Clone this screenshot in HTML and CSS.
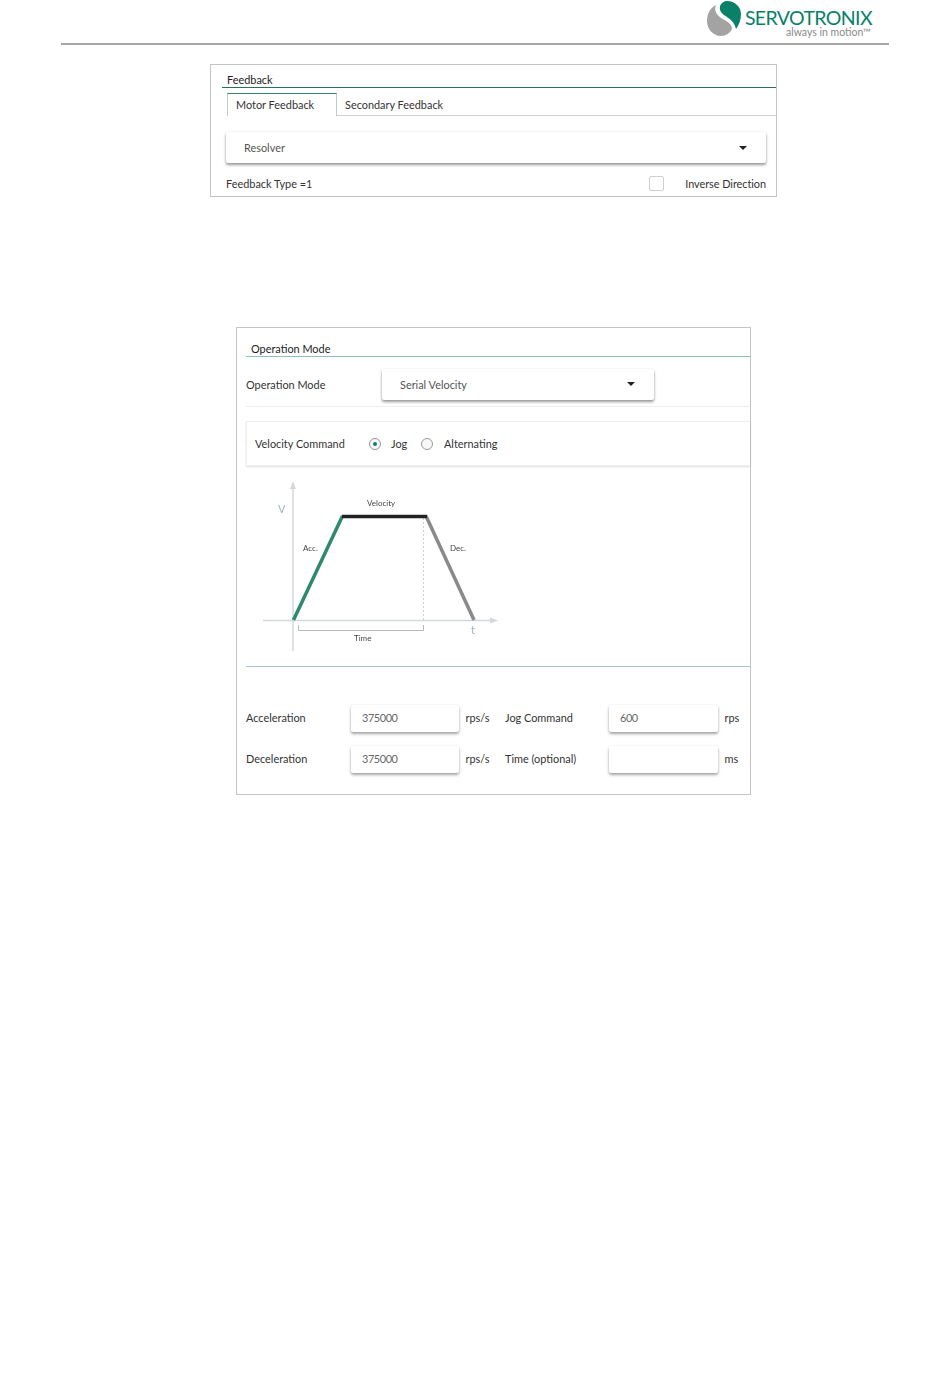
FILE: index.html
```html
<!DOCTYPE html>
<html lang="en">

<head>
    <meta charset="UTF-8">
    <meta name="viewport" content="width=device-width, initial-scale=1.0">
    <title>Servotronix Feedback and Operation Mode</title>
    <link rel="stylesheet" href="styles.css">
</head>

<body>
    <header class="page-header">
        <div class="logo">
            <svg class="logo-mark" width="42" height="38" viewBox="0 0 42 38">
                <path fill="#a3a3a3" d="M16 5C14 10 16 14 21 18C27 21 32 24 32 29C30 33 26 36 21 36C13 36 7 29 7 21C7 14 10 8 16 5Z" />
                <path fill="#0b8068" d="M20 6C21 3 24 1 27 1C35 1 41 7 41 14C41 20 39 25 36 29C35 24 32 20 27 17C22 14 19 11 20 6Z" />
            </svg>
            <div class="logo-text">
                <span class="logo-name">SERVOTRONIX</span>
                <span class="logo-tag">always in motion™</span>
            </div>
        </div>
    </header>

    <section class="panel feedback-panel">
        <h2 class="panel-title">Feedback</h2>
        <div class="tabs">
            <div class="tab active">Motor Feedback</div>
            <div class="tab">Secondary Feedback</div>
        </div>
        <div class="select feedback-select">
            <span>Resolver</span>
            <i class="caret"></i>
        </div>
        <div class="feedback-footer">
            <span>Feedback Type =1</span>
            <div class="inverse">
                <i class="checkbox"></i>
                <span>Inverse Direction</span>
            </div>
        </div>
    </section>

    <section class="panel mode-panel">
        <h2 class="panel-title mode-title">Operation Mode</h2>
        <div class="mode-row">
            <span class="mode-label">Operation Mode</span>
            <div class="select mode-select">
                <span>Serial Velocity</span>
                <i class="caret"></i>
            </div>
        </div>
        <div class="velocity-card">
            <span class="velocity-label">Velocity Command</span>
            <i class="radio checked"></i>
            <span class="radio-text jog">Jog</span>
            <i class="radio"></i>
            <span class="radio-text alt">Alternating</span>
        </div>
        <svg class="diagram" width="260" height="180" viewBox="250 475 260 180">
            <g fill="none" stroke="#d3d8da" stroke-width="1.5">
                <path d="M293 488V651" />
                <path d="M263 620.500H492" />
            </g>
            <path fill="#d3d8da" d="M293 481L296 489H290Z" />
            <path fill="#d3d8da" d="M498 620.500L490 617.500V623.500Z" />
            <path fill="none" stroke="#d0d0d0" stroke-dasharray="2 2" d="M423.500 518V620" />
            <path fill="none" stroke="#b5bbbb" d="M298.500 625V630.500H423.500V625" />
            <path fill="none" stroke="#2e8a6e" stroke-width="3.500" d="M293.500 620L342.500 516" />
            <path fill="none" stroke="#8a8a8a" stroke-width="3.500" d="M426 516L474 620" />
            <path fill="none" stroke="#222" stroke-width="3.500" d="M342 516.500H427" />
            <text class="axis" x="278" y="513">V</text>
            <text class="axis" x="471" y="634">t</text>
            <text x="367" y="506">Velocity</text>
            <text x="303" y="551">Acc.</text>
            <text x="450" y="551">Dec.</text>
            <text x="354" y="641">Time</text>
        </svg>
        <div class="form-grid">
            <span>Acceleration</span>
            <div class="input">375000</div>
            <span>rps/s</span>
            <span>Jog Command</span>
            <div class="input">600</div>
            <span>rps</span>
            <span>Deceleration</span>
            <div class="input">375000</div>
            <span>rps/s</span>
            <span>Time (optional)</span>
            <div class="input"></div>
            <span>ms</span>
        </div>
    </section>
</body>

</html>
```

FILE: styles.css
```css
* {
    margin: 0;
    padding: 0;
    box-sizing: border-box;
}

body {
    font-family: "Lato", "Open Sans", sans-serif;
    font-size: 10.900px;
    color: #333;
    background: #fff;
}

.page-header {
    height: 45px;
    margin: 0 61px;
    border-bottom: 2px solid #a6a6a6;
    display: flex;
    justify-content: flex-end;
}

.logo {
    display: flex;
    width: 189px;
    height: 38px;
}

.logo-mark {
    flex: none;
}

.logo-text {
    display: flex;
    flex-direction: column;
    align-items: flex-end;
    width: 128px;
    margin-left: 2px;
    padding-top: 8px;
}

.logo-name {
    font-size: 19.500px;
    line-height: 20px;
    letter-spacing: -0.6px;
    color: #0b8068;
}

.logo-tag {
    font-size: 10.500px;
    line-height: 9px;
    color: #8a8a8a;
    margin-right: 1px;
}

.panel {
    border: 1px solid #c4c4c4;
    background: #fff;
}

.panel-title {
    font-size: 10.900px;
    font-weight: 400;
    color: #222;
}

.feedback-panel {
    width: 567px;
    height: 133px;
    margin: 19px 0 0 210px;
    padding: 0 0 0 11px;
}

.feedback-panel .panel-title {
    height: 23px;
    padding: 8px 0 0 5px;
    line-height: 14px;
    border-bottom: 1px solid #2a6e5c;
}

.tabs {
    display: flex;
    height: 23px;
    margin: 5px 0 0 5px;
    border-bottom: 1px solid #d0d0d0;
}

.tab {
    padding: 5px 8px 0;
    line-height: 14px;
}

.tab.active {
    width: 110px;
    height: 23px;
    padding-top: 4px;
    border: 1px solid #c8c8c8;
    border-top: 1px solid #2f8a72;
    border-bottom: 0;
    background: #fff;
}

.select {
    display: flex;
    align-items: center;
    justify-content: space-between;
    background: #fff;
    border-radius: 2px;
    box-shadow: 0 2px 3px rgba(0, 0, 0, 0.4), 0 0 2px rgba(0, 0, 0, 0.08);
    color: #555;
}

.feedback-select {
    width: 540px;
    height: 31px;
    margin: 16px 0 0 4px;
    padding: 0 19px 0 18px;
}

.caret {
    width: 0;
    height: 0;
    border-left: 4.500px solid transparent;
    border-right: 4.500px solid transparent;
    border-top: 4px solid #222;
}

.feedback-footer {
    display: flex;
    justify-content: space-between;
    align-items: center;
    width: 540px;
    margin: 12px 0 0 4px;
    height: 16px;
}

.inverse {
    display: flex;
    align-items: center;
    gap: 21px;
    letter-spacing: -0.05px;
}

.checkbox {
    width: 15px;
    height: 15px;
    border: 1px solid #cfcfcf;
    border-radius: 2px;
}

.mode-panel {
    width: 515px;
    height: 468px;
    margin: 130px 0 0 236px;
    padding-left: 9px;
}

.mode-title {
    height: 29px;
    padding: 14px 0 0 5px;
    line-height: 14px;
    border-bottom: 1px solid #8dc3b4;
}

.mode-row {
    display: flex;
    align-items: center;
    height: 50px;
    padding-top: 5px;
    border-bottom: 1px solid #eee;
}

.mode-label {
    width: 136px;
    flex: none;
}

.mode-select {
    width: 272px;
    height: 31px;
    padding: 0 19px 0 18px;
}

.velocity-card {
    display: flex;
    align-items: center;
    height: 45px;
    margin-top: 14px;
    padding-left: 8px;
    border: 1px solid #efefef;
    border-right: 0;
    box-shadow: 0 1px 2px rgba(0, 0, 0, 0.14);
}

.velocity-label {
    width: 114px;
}

.radio {
    position: relative;
    width: 12px;
    height: 12px;
    border: 1px solid #999;
    border-radius: 50%;
    background: #f7f7f7;
}

.radio.checked::after {
    content: "";
    position: absolute;
    top: 3px;
    left: 3px;
    width: 4px;
    height: 4px;
    border-radius: 50%;
    background: #0b8068;
}

.radio-text {
    margin-left: 10px;
}

.radio-text.jog {
    width: 30px;
}

.radio-text.alt {
    margin-left: 11px;
}

.diagram {
    display: block;
    margin: 9px 0 0 4px;
    filter: blur(0.3px);
}

.diagram text {
    font-size: 8px;
    fill: #444;
}

.diagram text.axis {
    font-size: 11px;
    fill: #9db4c0;
}

.form-grid {
    display: grid;
    grid-template-columns: 105px 108px 46px 104px 109px auto;
    grid-auto-rows: 27px;
    row-gap: 14px;
    align-items: center;
    margin-top: 50px;
    position: relative;
}

.form-grid::before {
    content: "";
    position: absolute;
    top: -39px;
    left: 0;
    right: 0;
    height: 1px;
    background: #a9c4d4;
}

.form-grid span {
    white-space: nowrap;
    padding-bottom: 2px;
}

.form-grid .input + span {
    padding-left: 6.500px;
}

.input {
    height: 27px;
    padding-left: 11px;
    line-height: 26px;
    letter-spacing: -0.4px;
    border-radius: 2px;
    background: #fff;
    color: #666;
    box-shadow: 0 2px 3px rgba(0, 0, 0, 0.35), 0 0 2px rgba(0, 0, 0, 0.08);
}
```
